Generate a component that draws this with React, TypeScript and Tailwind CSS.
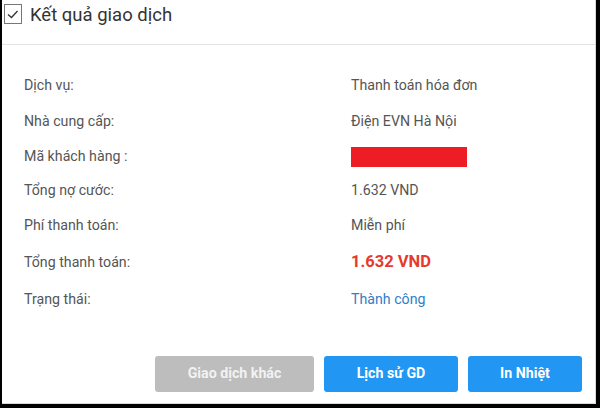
import React from "react";

const rows: { label: string; value: React.ReactNode; h: string }[] = [
  { label: "Dịch vụ:", value: <span>Thanh toán hóa đơn</span>, h: "h-[36px]" },
  { label: "Nhà cung cấp:", value: <span>Điện EVN Hà Nội</span>, h: "h-[35px]" },
  {
    label: "Mã khách hàng :",
    value: <span className="block w-[116px] h-[20px] bg-[#ee1c25]" />,
    h: "h-[35px]",
  },
  { label: "Tổng nợ cước:", value: <span>1.632 VND</span>, h: "h-[34px]" },
  { label: "Phí thanh toán:", value: <span>Miễn phí</span>, h: "h-[36px]" },
  {
    label: "Tổng thanh toán:",
    value: <span className="text-[16.5px] font-bold text-[#e53a2f]">1.632 VND</span>,
    h: "h-[37px]",
  },
  { label: "Trạng thái:", value: <span className="text-[#2f80c8]">Thành công</span>, h: "h-[38px]" },
];

export default function App() {
  return (
    <div
      className="w-[600px] h-[408px] bg-white border-l-2 border-r-[4px] border-b-[4px] border-black flex flex-col"
      style={{ fontFamily: "Roboto, 'Noto Sans', sans-serif" }}
    >
      <div className="flex-1 flex flex-col border-r border-b border-[#d9d9d9]">
        <div className="h-[45px] shrink-0 flex items-start pt-[4px] pl-[2px] border-b border-[#e3e3e3]">
          <svg width="18" height="20" viewBox="0 0 18 20">
            <rect x="0.5" y="0.5" width="17" height="19" fill="white" stroke="#777" />
            <path d="M4 10.5 L7.5 13.5 L13.5 7" fill="none" stroke="#333" strokeWidth="1.3" />
          </svg>
          <span className="ml-[8px] text-[18.5px] leading-[24px] text-[#333] -mt-[1px]">Kết quả giao dịch</span>
        </div>
        <div className="pt-[23px] pl-[22px]">
          {rows.map((r, i) => (
            <div key={i} className={`flex items-center ${r.h} text-[14.2px] text-[#555]`}>
              <div className="w-[327px]">{r.label}</div>
              <div>{r.value}</div>
            </div>
          ))}
        </div>
        <div className="flex justify-end gap-[10px] pr-[13px] mt-auto mb-[11px]">
          <button className="w-[159px] h-[36px] rounded-[3px] bg-[#bdbdbd] text-[#f2f2f2] text-[14.2px] font-bold">
            Giao dịch khác
          </button>
          <button className="w-[134px] h-[36px] rounded-[3px] bg-[#2196f3] text-white text-[14.2px] font-bold">
            Lịch sử GD
          </button>
          <button className="w-[114px] h-[36px] rounded-[3px] bg-[#2196f3] text-white text-[14.2px] font-bold">
            In Nhiệt
          </button>
        </div>
      </div>
    </div>
  );
}
